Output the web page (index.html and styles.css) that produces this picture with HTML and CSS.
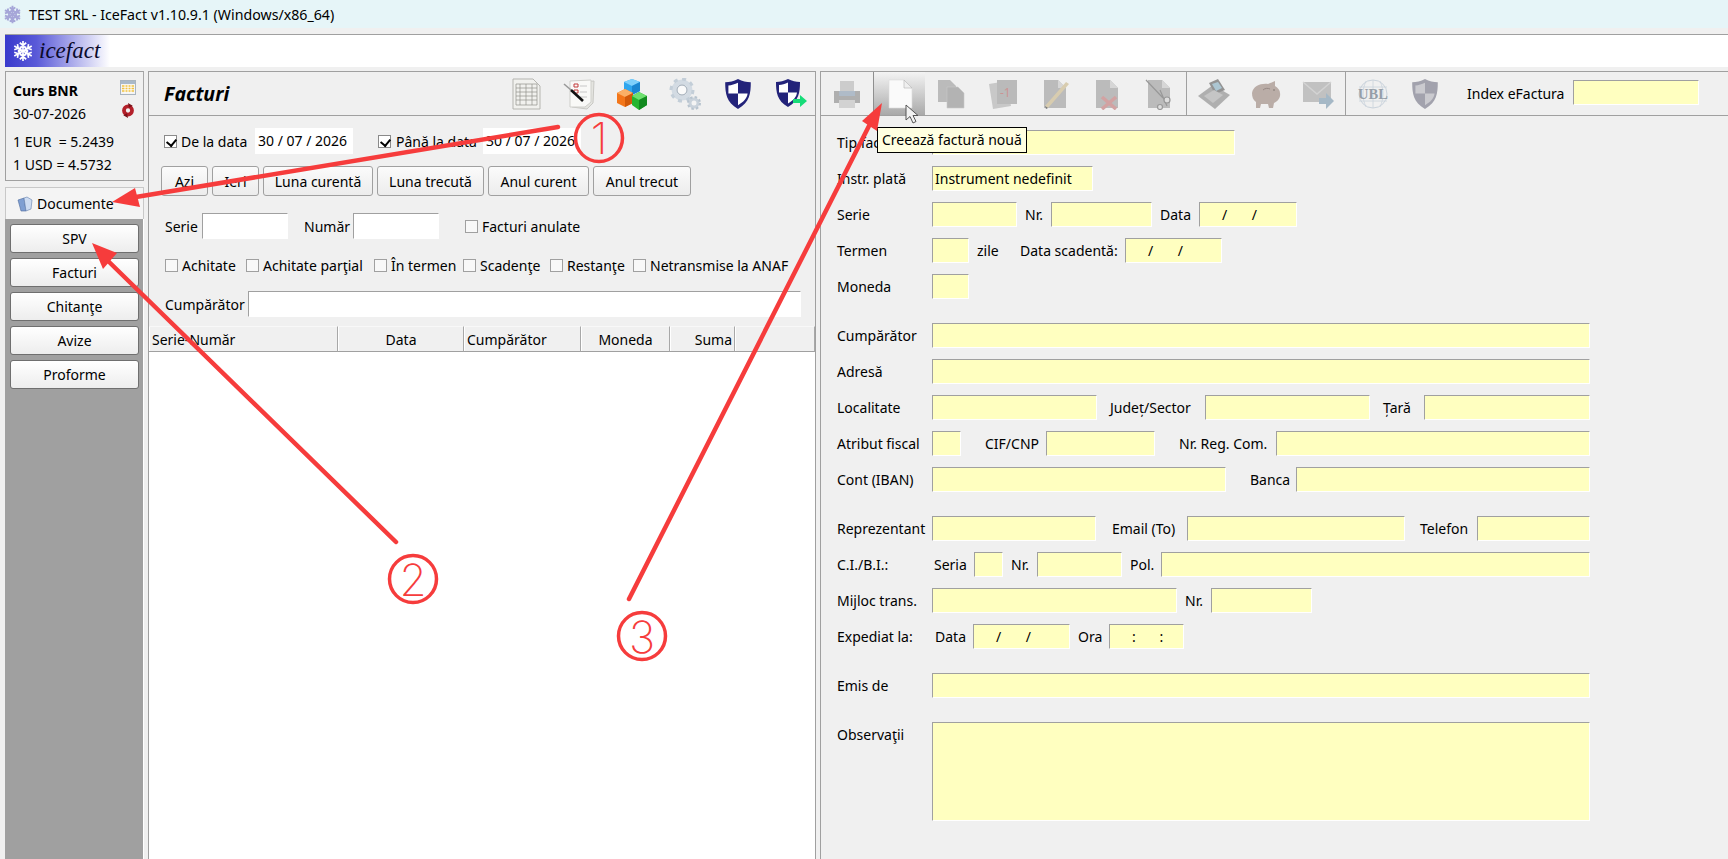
FILE: index.html
```html
<!DOCTYPE html>
<html lang="en">
<head>
    <meta charset="UTF-8">
    <meta name="viewport" content="width=device-width, initial-scale=1.0">
    <title>IceFact</title>
    <link rel="stylesheet" href="styles.css">
</head>
<body>

    <svg class="defs" width="0" height="0">
        <defs>
            <symbol id="flake" viewBox="-12 -12 24 24">
                <g id="flake-arm">
                    <path d="M0 0V-11M-3.500 -9L0 -6L3.500 -9M-2.500 -5L0 -3L2.500 -5"/>
                </g>
                <use href="#flake-arm" transform="rotate(60)"/>
                <use href="#flake-arm" transform="rotate(120)"/>
                <use href="#flake-arm" transform="rotate(180)"/>
                <use href="#flake-arm" transform="rotate(240)"/>
                <use href="#flake-arm" transform="rotate(300)"/>
            </symbol>
            <symbol id="shield" viewBox="0 0 26 30">
                <path d="M13 1C9 3 5 4 1 4C1 14 2 23 13 29C24 23 25 14 25 4C21 4 17 3 13 1Z" fill="currentColor"/>
                <path class="shield-check" d="M13 4.500C10 6 7 6.800 4 7V14.500H13ZM13 14.500V25.500C18.500 22 21.500 19 22 14.500Z"/>
            </symbol>
            <symbol id="page" viewBox="0 0 32 32">
                <path d="M5 2H19L27 10V30H5Z" fill="#b6b6b6"/>
                <path d="M19 2V10H27Z" fill="#d4d4d4"/>
            </symbol>
        </defs>
    </svg>

    <div class="titlebar">
        <svg class="title-icon"><use href="#flake"/></svg>
        <span>TEST SRL - IceFact v1.10.9.1 (Windows/x86_64)</span>
    </div>

    <div class="logobar">
        <div class="logo">
            <svg class="logo-flake"><use href="#flake"/></svg>
            <span class="logo-text">icefact</span>
        </div>
    </div>

    <div class="main">

        <div class="left">
            <div class="curs">
                <div class="curs-line">
                    <b>Curs BNR</b>
                    <svg class="curs-icon" viewBox="0 0 16 15">
                        <rect x=".5" y=".5" width="15" height="14" fill="#f4f4f4" stroke="#a9b4bf"/>
                        <rect x="1" y="1" width="14" height="3" fill="#a9b9c9"/>
                        <path d="M2 6H14M2 8.500H14M2 11H14" stroke="#f2c23e" stroke-width="1.400"/>
                        <path d="M5 5V13M8 5V13M11 5V13" stroke="#fff"/>
                    </svg>
                </div>
                <div class="curs-line">
                    <span>30-07-2026</span>
                    <svg class="curs-icon" viewBox="0 0 16 16">
                        <circle cx="8" cy="8" r="4.300" fill="none" stroke="#b3202a" stroke-width="4"/>
                        <path d="M8 0L13 3L9 5ZM8 16L3 13L7 11Z" fill="#7a1219"/>
                    </svg>
                </div>
                <div class="curs-line rate-first"><span>1 EUR &nbsp;= 5.2439</span></div>
                <div class="curs-line"><span>1 USD = 4.5732</span></div>
            </div>

            <div class="tab">
                <svg class="tab-icon" viewBox="0 0 16 16">
                    <path d="M1 4L7 2L9 15L4 15Z" fill="#7f9fd2" stroke="#4d6a9c" stroke-width=".6"/>
                    <path d="M15 4L10 1L7 2L9 15L14 13Z" fill="#cddcf2" stroke="#5f7cab" stroke-width=".6"/>
                </svg>
                <span>Documente</span>
            </div>
            <div class="tab-panel">
                <button class="nav-btn">SPV</button>
                <button class="nav-btn">Facturi</button>
                <button class="nav-btn">Chitanţe</button>
                <button class="nav-btn">Avize</button>
                <button class="nav-btn">Proforme</button>
            </div>
        </div>

        <div class="middle">
            <div class="mid-head">
                <h2>Facturi</h2>
                <div class="mid-icons">
                    <!-- spreadsheet -->
                    <svg class="tool" viewBox="0 0 32 32">
                        <path d="M3 1H23L30 8V31H3Z" fill="#f1f1ee" stroke="#b5b5b0"/>
                        <path d="M6 6H27V27H6ZM6 10H27M6 14H27M6 18H27M6 22H27M10 6V27M16 6V27M22 6V27" fill="none" stroke="#8f8f8a" stroke-width=".7"/>
                    </svg>
                    <!-- checklist with pen -->
                    <svg class="tool" viewBox="0 0 32 32">
                        <path d="M9 5L31 3L30 25L24 31L9 29Z" fill="#e4e4e0" stroke="#c8c8c4"/>
                        <path d="M7 3L28 2V24L22 29H7Z" fill="#f9f9f7" stroke="#cfcfcb"/>
                        <path d="M11 6H15V9H11ZM11 12H15V15H11Z" fill="none" stroke="#c23a3a"/>
                        <path d="M17 8H24M17 14H24M17 19H24" stroke="#c7c7c7"/>
                        <path d="M1 6L8 12" stroke="#999" stroke-width="1.600"/>
                        <path d="M8 12L20 23" stroke="#111" stroke-width="2.600"/>
                    </svg>
                    <!-- cubes -->
                    <svg class="tool" viewBox="0 0 32 32">
                        <path d="M16 1L24 4V13L16 17L8 13V4Z" fill="#2fa6ee"/>
                        <path d="M16 1L24 4L16 8L8 4Z" fill="#7fd0fb"/>
                        <path d="M16 8V17L24 13V4Z" fill="#1b86d0"/>
                        <path d="M9 11L17 15V25L9 29L1 25V15Z" fill="#f3761a"/>
                        <path d="M9 11L17 15L9 19L1 15Z" fill="#fbb066"/>
                        <path d="M9 19V29L17 25V15Z" fill="#d15a0a"/>
                        <path d="M23 14L31 18V27L23 32L16 27V18Z" fill="#25b52f"/>
                        <path d="M23 14L31 18L23 22L16 18Z" fill="#6ee06f"/>
                        <path d="M23 22V32L31 27V18Z" fill="#128a1f"/>
                    </svg>
                    <!-- gears -->
                    <svg class="tool" viewBox="0 0 32 32">
                        <circle cx="13" cy="12" r="8" fill="none" stroke="#d3dbe3" stroke-width="5"/>
                        <circle cx="13" cy="12" r="11" fill="none" stroke="#c3ced8" stroke-width="3" stroke-dasharray="4 4.600"/>
                        <circle cx="13" cy="12" r="5" fill="#fafafa" stroke="#9aa7b4"/>
                        <circle cx="25" cy="25" r="4" fill="#f4f4f4" stroke="#c9d2db" stroke-width="3"/>
                        <circle cx="25" cy="25" r="6" fill="none" stroke="#b7c3ce" stroke-width="2" stroke-dasharray="2.500 2.200"/>
                    </svg>
                    <!-- shield -->
                    <svg class="tool shield-on"><use href="#shield"/></svg>
                    <!-- shield with arrow -->
                    <svg class="tool shield-on" viewBox="0 0 32 32">
                        <use href="#shield" width="26" height="30"/>
                        <path d="M18 21H25V17L32 23L25 29V25H18Z" fill="#16dc78"/>
                    </svg>
                </div>
            </div>

            <div class="filters">
                <div class="row-dates">
                    <span class="check on"></span><span class="date-label">De la data</span>
                    <span class="white-box date-box">30 / 07 / 2026</span>
                    <span class="check on second"></span><span class="date-label to">Până la data</span>
                    <span class="white-box date-box">30 / 07 / 2026</span>
                </div>
                <div class="row-buttons">
                    <button class="btn b-47">Azi</button>
                    <button class="btn b-47">Ieri</button>
                    <button class="btn b-110">Luna curentă</button>
                    <button class="btn b-107">Luna trecută</button>
                    <button class="btn b-101">Anul curent</button>
                    <button class="btn b-98">Anul trecut</button>
                </div>
                <div class="row-serie">
                    <span class="serie-label">Serie</span>
                    <input class="white-input" type="text">
                    <span class="numar-label">Număr</span>
                    <input class="white-input" type="text">
                    <span class="check anulate"></span><span>Facturi anulate</span>
                </div>
                <div class="row-checks">
                    <label class="chk"><span class="check"></span>Achitate</label>
                    <label class="chk"><span class="check"></span>Achitate parţial</label>
                    <label class="chk"><span class="check"></span>În termen</label>
                    <label class="chk"><span class="check"></span>Scadenţe</label>
                    <label class="chk"><span class="check"></span>Restanţe</label>
                    <label class="chk"><span class="check"></span>Netransmise la ANAF</label>
                </div>
                <div class="row-client">
                    <span class="client-label">Cumpărător</span>
                    <input class="white-input client-input" type="text">
                </div>
            </div>

            <div class="table-head">
                <div class="th">Serie-Număr</div>
                <div class="th center">Data</div>
                <div class="th">Cumpărător</div>
                <div class="th center">Moneda</div>
                <div class="th right">Suma</div>
                <div class="th"></div>
            </div>
            <div class="table-body"></div>
        </div>

        <div class="detail">
            <div class="toolbar">
                <div class="tbtn off">
                    <svg class="tool" viewBox="0 0 32 32">
                        <path d="M9 3H23V13H9Z" fill="#c9c9c9"/>
                        <path d="M3 13H29V25H3Z" fill="#a9a9a9"/>
                        <path d="M8 13H24V18H8Z" fill="#a8b6c4"/>
                        <path d="M8 22H24V30H8Z" fill="#cfcfcf"/>
                    </svg>
                </div>
                <div class="tbtn hover">
                    <svg class="tool" viewBox="0 0 32 32">
                        <path d="M5 2H20L28 10V30H5Z" fill="#fafafa" stroke="#dcdcdc" stroke-width=".6"/>
                        <path d="M20 2V10H28Z" fill="#efefef" stroke="#b4b4b4" stroke-width=".6"/>
                    </svg>
                </div>
                <div class="tbtn off">
                    <svg class="tool" viewBox="0 0 32 32">
                        <path d="M3 2H15L21 8V24H3Z" fill="#b6b6b6"/>
                        <path d="M12 9H23L29 15V30H12Z" fill="#adadad" stroke="#c6c6c6" stroke-width=".6"/>
                    </svg>
                </div>
                <div class="tbtn off">
                    <svg class="tool" viewBox="0 0 32 32">
                        <path d="M2 6L20 3L24 28L6 31Z" fill="#c4c4c4"/>
                        <path d="M10 2H30V26H10Z" fill="#b5b5b5"/>
                        <text class="minus-one" x="13" y="19">-1</text>
                    </svg>
                </div>
                <div class="tbtn off">
                    <svg class="tool" viewBox="0 0 32 32">
                        <use href="#page" width="32" height="32"/>
                        <path d="M6 28L27 4L30 6L9 30Z" fill="#d6c9a8"/>
                        <path d="M6 28L7 31L9 30Z" fill="#6b6b6b"/>
                    </svg>
                </div>
                <div class="tbtn off">
                    <svg class="tool" viewBox="0 0 32 32">
                        <use href="#page" width="32" height="32"/>
                        <path d="M11 19L25 31M25 19L11 31" stroke="#cf9a9a" stroke-width="3.600"/>
                    </svg>
                </div>
                <div class="tbtn off">
                    <svg class="tool" viewBox="0 0 32 32">
                        <use href="#page" width="32" height="32"/>
                        <path d="M3 2L20 20M24 28L17 12" stroke="#8f8f8f" stroke-width="1.200"/>
                        <circle cx="24" cy="22" r="3" fill="#ddd" stroke="#8f8f8f" stroke-width="1.200"/>
                        <circle cx="17" cy="29" r="2.500" fill="#ddd" stroke="#8f8f8f" stroke-width="1.200"/>
                    </svg>
                </div>
                <div class="tsep"></div>
                <div class="tbtn off">
                    <svg class="tool" viewBox="0 0 32 32">
                        <path d="M0 18L15 7L32 17L17 31Z" fill="#a9a9a9"/>
                        <path d="M11 5L20 1L27 12L17 16Z" fill="#8a8a8a"/>
                        <path d="M14 6L20 4L24 10L18 13Z" fill="#a5c2cf"/>
                        <path d="M6 18L16 12L25 17L15 25Z" fill="#c1c1c1"/>
                    </svg>
                </div>
                <div class="tbtn off">
                    <svg class="tool" viewBox="0 0 32 32">
                        <path d="M2 15C3 8 11 5 18 6L25 3L25 8C28 10 30 12 30 15C31 20 27 24 24 25L23 30H19L18 26H11L10 30H6L6 24C3 22 2 19 2 15Z" fill="#b5a6a0"/>
                        <circle cx="24" cy="12" r="1" fill="#8d7f7a"/>
                        <path d="M13 12C15 10 18 10 20 11" stroke="#8d7f7a" fill="none"/>
                    </svg>
                </div>
                <div class="tbtn off">
                    <svg class="tool" viewBox="0 0 32 32">
                        <path d="M1 4H29V24H1Z" fill="#bdbdbd"/>
                        <path d="M1 4L15 16L29 4" fill="none" stroke="#d0d0d0" stroke-width="1.400"/>
                        <path d="M17 20H24V15L32 23L24 31V26H17Z" fill="#9db3c2"/>
                    </svg>
                </div>
                <div class="tsep"></div>
                <div class="tbtn off">
                    <svg class="tool" viewBox="0 0 32 32">
                        <circle cx="16" cy="16" r="14" fill="none" stroke="#c6d0da"/>
                        <path d="M2 9H30M2 23H30M16 2V30M9 3C5 12 5 20 9 29M23 3C27 12 27 20 23 29" fill="none" stroke="#c6d0da" stroke-width=".8"/>
                        <text class="ubl" x="16" y="21">UBL</text>
                    </svg>
                </div>
                <div class="tbtn off">
                    <svg class="tool shield-off"><use href="#shield"/></svg>
                </div>
                <span class="index-label">Index eFactura</span>
                <input class="field w-126 index-input" type="text">
            </div>

            <div class="form">
                <div class="row"><span class="lbl">Tip factură</span><input class="field w-303" type="text"></div>
                <div class="row"><span class="lbl">Instr. plată</span><div class="field w-161">Instrument nedefinit</div></div>
                <div class="row">
                    <span class="lbl">Serie</span><input class="field w-85" type="text">
                    <span class="lbl-in nr">Nr.</span><input class="field w-101" type="text">
                    <span class="lbl-in data">Data</span><div class="field w-98 date-val">/ /</div>
                </div>
                <div class="row">
                    <span class="lbl">Termen</span><input class="field w-37" type="text">
                    <span class="lbl-in zile">zile</span>
                    <span class="lbl-in scad">Data scadentă:</span><div class="field w-97 date-val">/ /</div>
                </div>
                <div class="row"><span class="lbl">Moneda</span><input class="field w-37" type="text"></div>

                <div class="row sep"><span class="lbl">Cumpărător</span><input class="field grow" type="text"></div>
                <div class="row"><span class="lbl">Adresă</span><input class="field grow" type="text"></div>
                <div class="row">
                    <span class="lbl">Localitate</span><input class="field w-165" type="text">
                    <span class="lbl-in judet">Județ/Sector</span><input class="field w-165" type="text">
                    <span class="lbl-in tara">Țară</span><input class="field grow" type="text">
                </div>
                <div class="row">
                    <span class="lbl">Atribut fiscal</span><input class="field w-29" type="text">
                    <span class="lbl-in cif">CIF/CNP</span><input class="field w-109" type="text">
                    <span class="lbl-in regcom">Nr. Reg. Com.</span><input class="field grow" type="text">
                </div>
                <div class="row">
                    <span class="lbl">Cont (IBAN)</span><input class="field w-294" type="text">
                    <span class="lbl-in banca">Banca</span><input class="field grow" type="text">
                </div>

                <div class="row sep">
                    <span class="lbl">Reprezentant</span><input class="field w-164" type="text">
                    <span class="lbl-in email">Email (To)</span><input class="field w-218" type="text">
                    <span class="lbl-in telefon">Telefon</span><input class="field grow" type="text">
                </div>
                <div class="row">
                    <span class="lbl">C.I./B.I.:</span>
                    <span class="lbl-in seria">Seria</span><input class="field w-29" type="text">
                    <span class="lbl-in nr">Nr.</span><input class="field w-85" type="text">
                    <span class="lbl-in pol">Pol.</span><input class="field grow" type="text">
                </div>
                <div class="row">
                    <span class="lbl">Mijloc trans.</span><input class="field w-245" type="text">
                    <span class="lbl-in nr">Nr.</span><input class="field w-101" type="text">
                </div>
                <div class="row">
                    <span class="lbl">Expediat la:</span>
                    <span class="lbl-in exp-data">Data</span><div class="field w-97 date-val">/ /</div>
                    <span class="lbl-in ora">Ora</span><div class="field w-75 time-val">: :</div>
                </div>

                <div class="row sep"><span class="lbl">Emis de</span><input class="field grow" type="text"></div>
                <div class="row sep obs-row"><span class="lbl obs-lbl">Observaţii</span><textarea class="field grow obs"></textarea></div>
            </div>
        </div>
    </div>

    <div class="tooltip">Creează factură nouă</div>

    <!-- mouse pointer -->
    <svg class="pointer" viewBox="0 0 14 20">
        <path d="M1 1V16L5 12.500L8 19L11 17.500L8 11.500H13Z" fill="#f2f2f2" stroke="#555" stroke-width="1"/>
    </svg>

    <!-- red annotations drawn on top of the screenshot -->
    <svg class="notes" viewBox="0 0 1728 859">
        <g class="note-line">
            <path d="M558 127L136 197"/>
            <path d="M396 542L105 258"/>
            <path d="M629 599L871 122"/>
        </g>
        <g class="note-ring">
            <circle cx="599" cy="138" r="23.500"/>
            <circle cx="413" cy="579" r="23.500"/>
            <circle cx="642" cy="636" r="23.500"/>
        </g>
        <g class="note-head">
            <path d="M112 202L135 188L140 207Z"/>
            <path d="M92 243L117 253L103 269Z"/>
            <path d="M882 103L862 121L877 131Z"/>
        </g>
        <g class="note-num">
            <text x="599" y="154">1</text>
            <text x="413" y="596">2</text>
            <text x="642" y="653">3</text>
        </g>
    </svg>

</body>
</html>
```

FILE: styles.css
```css
* {
    box-sizing: border-box;
}
html, body {
    margin: 0;
    height: 100%;
}
body {
    height: 859px;
    overflow: hidden;
    display: flex;
    flex-direction: column;
    position: relative;
    background: #f0f0f0;
    color: #000;
    font-family: "Noto Sans", sans-serif;
    font-size: 14px;
}
.defs {
    position: absolute;
}
button, input, textarea {
    font: inherit;
    color: inherit;
    margin: 0;
}

/* window title */
.titlebar {
    height: 28px;
    flex: none;
    display: flex;
    align-items: center;
    background: #e6f5f8;
    padding-left: 3px;
    font-size: 14.2px;
}
.title-icon {
    width: 19px;
    height: 19px;
    margin-right: 7px;
    fill: none;
    stroke: #a6a6d8;
    stroke-width: 2.400;
}

/* logo */
.logobar {
    height: 33px;
    flex: none;
    margin: 6px 0 0 5px;
    background: #fff;
    border-top: 1px solid #a0a0a0;
}
.logo {
    width: 105px;
    height: 32px;
    display: flex;
    align-items: center;
    padding-left: 7px;
    background: linear-gradient(90deg, #3a3acc 0%, #5a5ad8 30%, #b9b9ee 70%, #fff 100%);
}
.logo-flake {
    width: 22px;
    height: 22px;
    margin-right: 5px;
    fill: none;
    stroke: #fff;
    stroke-width: 1.800;
}
.logo-text {
    font-family: "Liberation Serif", serif;
    font-style: italic;
    font-size: 23px;
    color: #0a0a2a;
}

.main {
    flex: 1;
    display: flex;
    padding: 4px 0 0 5px;
    min-height: 0;
}

/* left column */
.left {
    width: 139px;
    flex: none;
    display: flex;
    flex-direction: column;
}
.curs {
    height: 110px;
    padding: 7px 7px 0;
    border: 1px solid #a0a0a0;
    border-right-color: #a8a8a8;
    margin-bottom: 6px;
}
.curs-line {
    height: 23px;
    display: flex;
    align-items: center;
    justify-content: space-between;
}
.rate-first {
    margin-top: 5px;
}
.curs-icon {
    width: 16px;
    height: 15px;
    margin-top: -6px;
}
.tab {
    height: 32px;
    flex: none;
    display: flex;
    align-items: center;
    gap: 4px;
    padding-left: 11px;
    border: 1px solid #c8c8c8;
    border-bottom: none;
    background: #f4f4f4;
}
.tab-icon {
    width: 16px;
    height: 16px;
}
.tab-panel {
    flex: 1;
    display: flex;
    flex-direction: column;
    gap: 5px;
    padding: 5px;
    background: #a0a0a0;
    border-right: 1px solid #fff;
}
.nav-btn {
    height: 29px;
    flex: none;
    width: 129px;
    padding: 0;
    border: 1px solid #6f6f6f;
    border-radius: 3px;
    background: linear-gradient(#fff, #ededed);
}

/* invoice list */
.middle {
    width: 668px;
    flex: none;
    margin-left: 4px;
    display: flex;
    flex-direction: column;
    border: 1px solid #a0a0a0;
    border-bottom: none;
}
.mid-head {
    height: 44px;
    flex: none;
    display: flex;
    align-items: center;
    justify-content: space-between;
    border-bottom: 1px solid #a0a0a0;
    padding: 0 8px 0 15px;
}
h2 {
    margin: 0;
    font-size: 19.5px;
    font-style: italic;
    font-weight: 700;
}
.mid-icons {
    display: flex;
    gap: 21px;
}
.tool {
    width: 32px;
    height: 32px;
    display: block;
}
.shield-on {
    color: #23237a;
    --check: #fff;
}
.shield-off {
    color: #9a9aa6;
    --check: #c6c6cc;
}
.shield-check {
    fill: var(--check);
}
.filters {
    flex: none;
    padding-top: 12px;
}
.row-dates, .row-serie, .row-client {
    height: 26px;
    display: flex;
    align-items: center;
}
.row-dates {
    padding-left: 15px;
}
.check {
    width: 13px;
    height: 13px;
    flex: none;
    display: inline-block;
    position: relative;
    background: #f8f8f8;
    border: 1px solid #a0a0a0;
}
.check.on {
    border-color: #8a8a8a;
    background: #fff;
}
.check.on::after {
    content: "";
    position: absolute;
    left: 3px;
    top: 1px;
    width: 5px;
    height: 7px;
    border: solid #000;
    border-width: 0 2px 2px 0;
    transform: rotate(40deg);
}
.date-label {
    width: 78px;
    padding-left: 4px;
}
.date-label.to {
    width: 92px;
    padding-left: 5px;
}
.check.second {
    margin-left: 25px;
}
.white-box {
    background: #fff;
    height: 26px;
    line-height: 26px;
    padding-left: 3px;
}
.date-box {
    width: 98px;
}
.white-input {
    width: 86px;
    height: 26px;
    padding: 0 3px;
    background: #fff;
    border: 1px solid #fff;
    border-top-color: #a0a0a0;
    border-left-color: #a0a0a0;
    border-radius: 0;
    outline: none;
}
.row-buttons {
    display: flex;
    gap: 4px;
    height: 30px;
    margin-top: 12px;
    padding-left: 12px;
}
.btn {
    height: 30px;
    padding: 0;
    border: 1px solid #a0a0a0;
    border-radius: 3px;
    background: linear-gradient(#fbfbfb, #ececec);
}
.b-47 { width: 47px; }
.b-110 { width: 110px; }
.b-107 { width: 107px; }
.b-101 { width: 101px; }
.b-98 { width: 98px; }
.row-serie {
    margin-top: 17px;
    padding-left: 16px;
}
.serie-label { width: 37px; }
.numar-label { width: 49px; margin-left: 16px; }
.check.anulate {
    margin: 0 4px 0 26px;
}
.row-checks {
    height: 26px;
    margin-top: 13px;
    padding-left: 16px;
    display: grid;
    grid-template-columns: 81px 128px 89px 87px 83px auto;
    align-items: center;
}
.chk {
    display: flex;
    align-items: center;
    gap: 4px;
    white-space: nowrap;
}
.row-client {
    margin-top: 13px;
    padding-left: 16px;
}
.client-label { width: 83px; }
.client-input { width: 553px; }
.table-head {
    height: 26px;
    flex: none;
    margin-top: 9px;
    display: grid;
    grid-template-columns: 189px 126px 117px 89px 65px 80px;
}
.th {
    display: flex;
    align-items: center;
    padding: 0 2px 0 3px;
    background: #f0f0f0;
    border-right: 1px solid #a8a8a8;
    border-bottom: 1px solid #a0a0a0;
    border-top: 1px solid #f8f8f8;
    box-shadow: inset 1px 0 0 #fff;
}
.th.center { justify-content: center; }
.th.right { justify-content: flex-end; }
.table-body {
    flex: 1;
    background: #fff;
}

/* invoice detail */
.detail {
    flex: 1;
    margin-left: 4px;
    border-left: 1px solid #a0a0a0;
    display: flex;
    flex-direction: column;
    min-width: 0;
}
.toolbar {
    height: 45px;
    flex: none;
    display: flex;
    align-items: stretch;
    border-top: 1px solid #a0a0a0;
    border-bottom: 1px solid #a0a0a0;
}
.tbtn {
    width: 52px;
    flex: none;
    display: flex;
    align-items: center;
    justify-content: center;
}
.tbtn.off .tool {
    opacity: .9;
}
.tbtn.hover {
    background: linear-gradient(#f4f4f4, #a9a9a9);
    border-left: 1px solid #8f8f8f;
}
.tsep {
    width: 1px;
    flex: none;
    margin-left: 1px;
    margin-right: 1px;
    background: #a0a0a0;
}
.minus-one {
    font-size: 12px;
    fill: #c88a8a;
}
.ubl {
    font-family: "Liberation Serif", serif;
    font-weight: 700;
    font-size: 14.5px;
    fill: #8d96a0;
    text-anchor: middle;
}
.index-label {
    width: 106px;
    margin-left: 16px;
    align-self: center;
}
.index-input {
    align-self: center;
    margin-bottom: 2px;
}
.form {
    padding: 14px 0 0 16px;
    width: 769px;
    display: flex;
    flex-direction: column;
    gap: 11px;
}
.row {
    display: flex;
    align-items: center;
    height: 25px;
}
.row.sep {
    margin-top: 13px;
}
.lbl {
    width: 95px;
    flex: none;
    white-space: nowrap;
}
.lbl-in {
    flex: none;
    margin-left: 8px;
    white-space: nowrap;
}
.field {
    height: 25px;
    flex: none;
    padding: 0 2px;
    background: #ffffc0;
    border: 1px solid #fff;
    border-top-color: #a0a0a0;
    border-left-color: #a0a0a0;
    border-radius: 0;
    outline: none;
    line-height: 23px;
    white-space: nowrap;
}
.grow { flex: 1; min-width: 0; }
.w-29 { width: 29px; }
.w-37 { width: 37px; }
.w-75 { width: 75px; }
.w-85 { width: 85px; }
.w-97 { width: 97px; }
.w-98 { width: 98px; }
.w-101 { width: 101px; }
.w-109 { width: 109px; }
.w-126 { width: 126px; }
.w-161 { width: 161px; }
.w-164 { width: 164px; }
.w-165 { width: 165px; }
.w-218 { width: 218px; }
.w-245 { width: 245px; }
.w-294 { width: 294px; }
.w-303 { width: 303px; }
.nr { width: 26px; }
.data { width: 39px; }
.zile { width: 43px; }
.scad { width: 105px; margin-left: 0; }
.judet { width: 95px; margin-left: 13px; }
.tara { width: 41px; margin-left: 13px; }
.cif { width: 61px; margin-left: 24px; }
.regcom { width: 97px; margin-left: 24px; }
.banca { width: 46px; margin-left: 24px; }
.email { width: 75px; margin-left: 16px; }
.telefon { width: 57px; margin-left: 15px; }
.seria { width: 40px; margin-left: 2px; }
.pol { width: 31px; }
.exp-data { width: 38px; margin-left: 3px; }
.ora { width: 31px; }
.date-val { padding-left: 22px; word-spacing: 21px; }
.time-val { padding-left: 22px; word-spacing: 20px; }
.obs-row {
    height: 99px;
    align-items: flex-start;
}
.obs-lbl {
    padding-top: 3px;
}
.obs {
    height: 99px;
    resize: none;
}

/* things lying over the page */
.tooltip {
    position: absolute;
    left: 877px;
    top: 127px;
    width: 150px;
    height: 26px;
    line-height: 24px;
    padding-left: 4px;
    background: #ffffe1;
    border: 1px solid #000;
    white-space: nowrap;
}
.pointer {
    position: absolute;
    left: 905px;
    top: 104px;
    width: 14px;
    height: 20px;
}
.notes {
    position: absolute;
    left: 0;
    top: 0;
    width: 1728px;
    height: 859px;
    pointer-events: none;
}
.note-line {
    fill: none;
    stroke: #f63c3c;
    stroke-width: 4.500;
    stroke-linecap: round;
}
.note-ring {
    fill: none;
    stroke: #f63c3c;
    stroke-width: 3.500;
}
.note-head {
    fill: #f63c3c;
}
.note-num {
    font-family: "Inter", sans-serif;
    font-weight: 200;
    font-size: 44px;
    fill: #f63c3c;
    text-anchor: middle;
}
```
